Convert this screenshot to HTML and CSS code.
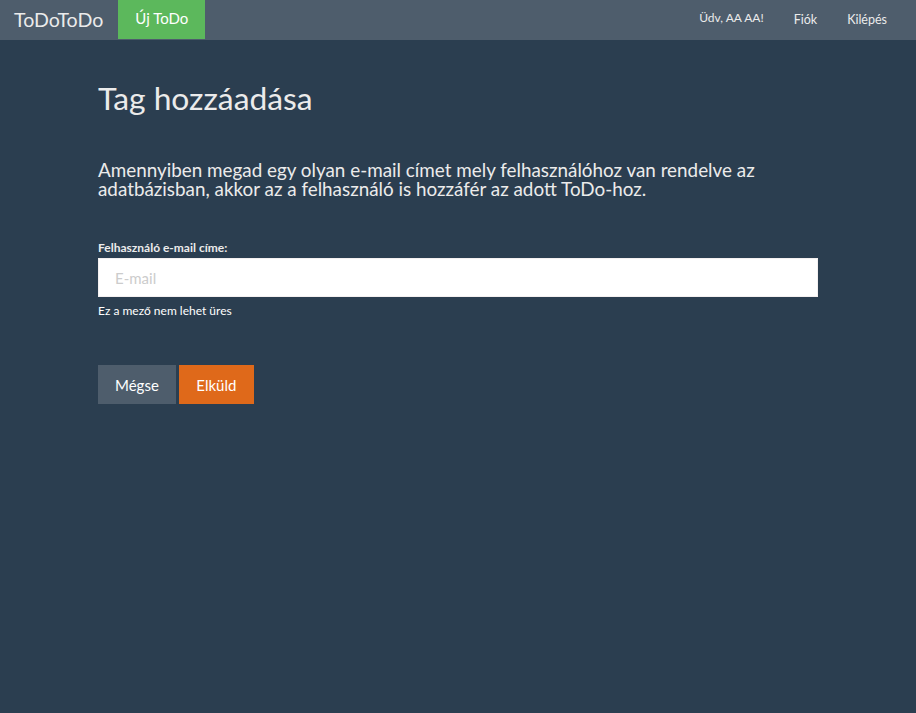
FILE: index.html
```html
<!DOCTYPE html>
<html lang="hu">
<head>
<meta charset="utf-8">
<title>Tag hozzáadása</title>
<link rel="stylesheet" href="styles.css">
</head>
<body>
<nav class="navbar">
  <div class="nav-left">
    <a class="brand" href="#">ToDoToDo</a>
    <a class="new-todo" href="#">Új ToDo</a>
  </div>
  <div class="nav-right">
    <span class="greet">Üdv, AA AA!</span>
    <a class="nav-link" href="#">Fiók</a>
    <a class="nav-link" href="#">Kilépés</a>
  </div>
</nav>
<main class="container">
  <h1 class="title">Tag hozzáadása</h1>
  <h4 class="lead">Amennyiben megad egy olyan e-mail címet mely felhasználóhoz van rendelve az adatbázisban, akkor az a felhasználó is hozzáfér az adott ToDo-hoz.</h4>
  <form class="form">
    <label class="label" for="email">Felhasználó e-mail címe:</label>
    <input class="input" id="email" type="email" placeholder="E-mail">
    <small class="help">Ez a mező nem lehet üres</small>
    <div class="actions">
      <button type="button" class="btn btn-default">Mégse</button>
      <button type="submit" class="btn btn-warning">Elküld</button>
    </div>
  </form>
</main>
</body>
</html>
```
FILE: styles.css
```css
* { box-sizing: border-box; }
html, body { margin: 0; }
body {
  background: #2b3e50;
  color: #ebebeb;
  font-family: Lato, "Open Sans", "Liberation Sans", sans-serif;
  font-size: 15px;
  line-height: 1.42857;
  min-height: 713px;
}
a { color: inherit; text-decoration: none; }

.navbar {
  display: flex;
  justify-content: space-between;
  align-items: stretch;
  height: 40px;
  background: #4e5d6c;
}
.nav-left, .nav-right { display: flex; align-items: stretch; }
.brand {
  display: flex;
  align-items: center;
  padding: 0 15px 0 14px;
  font-size: 19.6px;
  color: #ebebeb;
}
.new-todo {
  display: flex;
  align-items: center;
  padding: 0 17px 1px;
  background: #5cb85c;
  color: #fff;
  font-size: 15px;
  height: 39px;
}
.nav-right { padding-right: 14px; }
.greet {
  display: flex;
  align-items: center;
  padding: 0 15px 5px;
  font-size: 12px;
}
.nav-link {
  display: flex;
  align-items: center;
  padding: 0 15px;
  font-size: 12.5px;
  color: #ebebeb;
}

.container {
  width: 720px;
  margin: 0 auto;
  padding-top: 41px;
}
.title {
  margin: 0;
  font-size: 31.8px;
  font-weight: 400;
  line-height: 35px;
  color: #ebebeb;
}
.lead {
  margin: 44px 0 0;
  font-size: 18.85px;
  font-weight: 400;
  line-height: 19px;
}
.form {
  display: flex;
  flex-direction: column;
  align-items: flex-start;
  margin-top: 41px;
}
.label {
  font-size: 12px;
  font-weight: 700;
  margin-bottom: 2px;
}
.input {
  width: 720px;
  height: 39px;
  padding: 8px 16px;
  border: 1px solid #f4f0f0;
  border-radius: 0;
  background: #fff;
  font-family: inherit;
  font-size: 15px;
  color: #333;
  outline: none;
}
.input::placeholder { color: #cccccc; }
.help {
  margin-top: 5px;
  font-size: 12px;
  color: #fff;
}
.actions {
  display: flex;
  gap: 3px;
  margin-top: 46px;
}
.btn {
  height: 39px;
  padding: 0 17px;
  border: 0;
  border-radius: 0;
  font-family: inherit;
  font-size: 15px;
  color: #fff;
  cursor: pointer;
}
.btn-default { background: #4e5d6c; }
.btn-warning { background: #df691a; padding: 0 17.5px; }
```
